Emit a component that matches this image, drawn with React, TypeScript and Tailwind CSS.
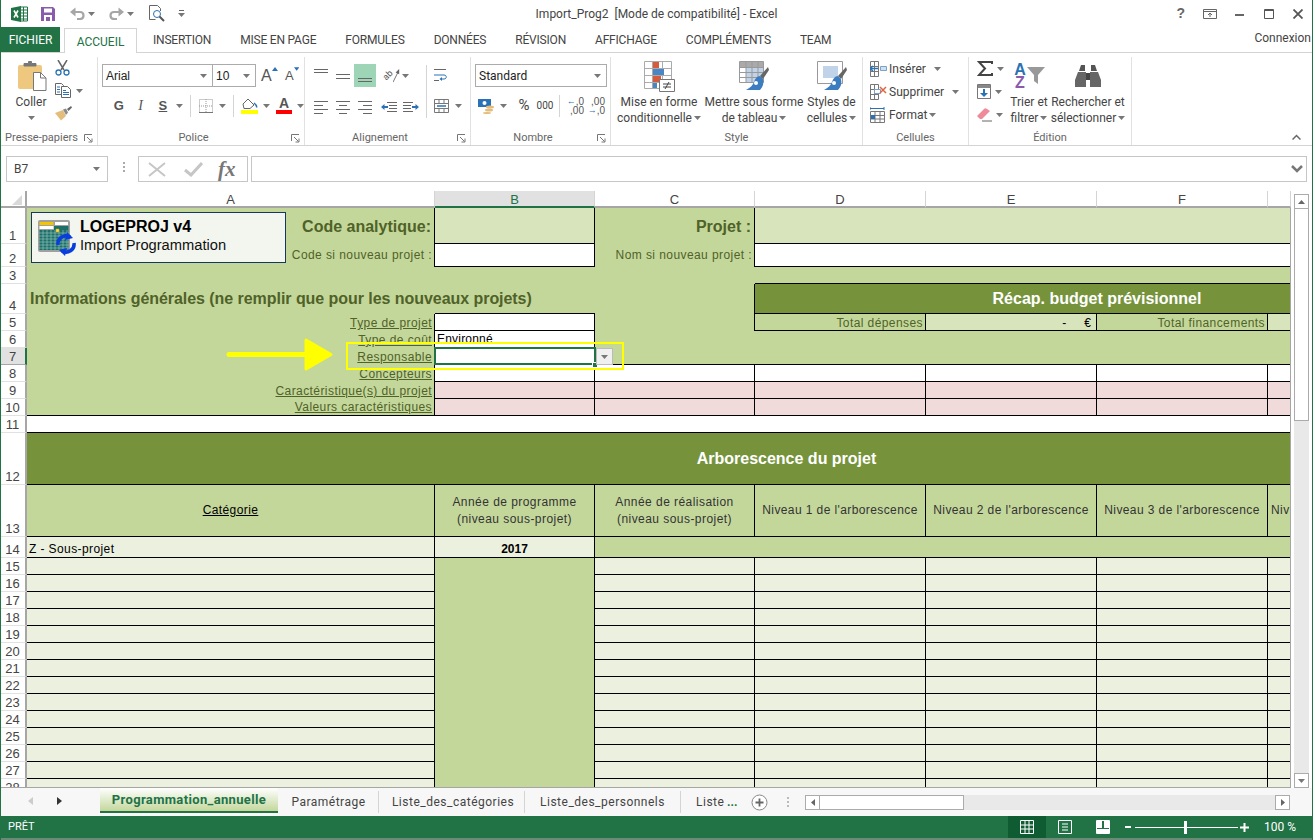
import type { ReactNode } from "react";

const Caret = ({ className = "" }: { className?: string }) => (
  <svg width="7" height="4" viewBox="0 0 7 4" className={className}>
    <path d="M0 0h7L3.5 4z" fill="#777" />
  </svg>
);

const Launcher = () => (
  <svg width="9" height="9" viewBox="0 0 9 9">
    <path d="M0.5 7V0.5H8M3 3l4.5 4.5M4.5 8H8V4.5" fill="none" stroke="#777" />
  </svg>
);

const Lines = ({ rows, w = 14 }: { rows: [number, number, number][]; w?: number }) => (
  <svg width={w} height="14" viewBox={`0 0 ${w} 14`}>
    {rows.map(([y, a, b]) => (
      <path key={y} d={`M${a} ${y + 0.5}H${b}`} stroke="#666" />
    ))}
  </svg>
);

function ExcelLogo() {
  return (
    <svg width="17" height="16" viewBox="0 0 17 16">
      <path d="M9 1h7.5v14H9z" fill="#fff" stroke="#217346" />
      <path d="M9 4h7M9 7h7M9 10h7M9 13h7M12.5 1v14" stroke="#217346" />
      <path d="M0 2l10-2v16L0 14z" fill="#217346" />
      <path d="M3 4.5l4 7M7 4.5l-4 7" stroke="#fff" strokeWidth="1.6" />
    </svg>
  );
}

function SaveIcon() {
  return (
    <svg width="14" height="14" viewBox="0 0 14 14">
      <path d="M0 0h12l2 2v12H0z" fill="#8a5aab" />
      <path d="M3 1.5h8v4H3z" fill="#fff" />
      <path d="M3 8h8v6H3z" fill="#fff" />
      <path d="M5 10h4v4H5z" fill="#8a5aab" />
    </svg>
  );
}

function UndoIcon({ flip = false }: { flip?: boolean }) {
  return (
    <svg width="15" height="13" viewBox="0 0 15 13" className={flip ? "-scale-x-100" : ""}>
      <path d="M2 5h8c2 0 3.500 1.500 3.500 3.500S12 12 10 12H7" fill="none" stroke="#a6a6a6" strokeWidth="2.200" />
      <path d="M5.500 0.500v9L0 5z" fill="#a6a6a6" />
    </svg>
  );
}

function PreviewIcon() {
  return (
    <svg width="16" height="17" viewBox="0 0 16 17">
      <path d="M0.500 0.500h8l3 3V6M0.500 0.500v14h6" fill="none" stroke="#666" />
      <circle cx="8" cy="9" r="3.500" fill="#fff" stroke="#2a72b5" />
      <path d="M10.500 11.500l4.500 4.500" stroke="#555" strokeWidth="2" />
    </svg>
  );
}

function PasteIcon() {
  return (
    <svg width="29" height="31" viewBox="0 0 29 31">
      <rect x="0" y="5" width="24" height="24" rx="2" fill="#edc87e" />
      <path d="M6 6V3.500h4.500V1.500h3v2H18V6z" fill="#777" stroke="#777" />
      <path d="M15.500 12.500h7l5.500 5.500v12.500H15.500z" fill="#fff" stroke="#777" />
      <path d="M22.500 12.500V18H28" fill="none" stroke="#777" />
    </svg>
  );
}

function CutIcon() {
  return (
    <svg width="15" height="16" viewBox="0 0 15 16">
      <path d="M3 0l6 10M12 0L6 10" stroke="#666" strokeWidth="1.500" />
      <circle cx="3.500" cy="12.500" r="2.500" fill="none" stroke="#2a72b5" strokeWidth="1.300" />
      <circle cx="11.500" cy="12.500" r="2.500" fill="none" stroke="#2a72b5" strokeWidth="1.300" />
    </svg>
  );
}

function CopyIcon() {
  return (
    <svg width="16" height="15" viewBox="0 0 16 15">
      <path d="M0.500 0.500h6l2 2v9h-8z" fill="#fff" stroke="#666" />
      <path d="M6.500 3.500h6l3 3v8h-9z" fill="#fff" stroke="#666" />
      <path d="M2 4h3M2 6.500h3M2 9h3M8 7.500h3M8 9.500h6M8 11.500h6" stroke="#2a72b5" />
    </svg>
  );
}

function BrushIcon() {
  return (
    <svg width="17" height="15" viewBox="0 0 17 15">
      <path d="M0 7l8-3 3 6-5 4.500z" fill="#e4bd7c" />
      <path d="M8 3.500l3-1 2 4-2 2.500z" fill="#8a8a8a" />
      <path d="M12 3l4-3 1 1.500-3.500 3.500z" fill="#666" />
    </svg>
  );
}

function GrowA({ up }: { up: boolean }) {
  return (
    <span className={`flex items-start font-['Liberation_Sans',sans-serif] text-[#555] ${up ? "w-[17px] text-[16px]" : "w-[14px] text-[13px]"}`}>
      <span className="leading-[20px]">A</span>
      <svg width="6" height="4" viewBox="0 0 6 4" className="mt-[1px]">
        <path d={up ? "M0 4h6L3 0z" : "M0 0h6L3 4z"} fill="#2a72b5" />
      </svg>
    </span>
  );
}

function BordersIcon() {
  return (
    <svg width="14" height="14" viewBox="0 0 14 14">
      <path d="M0.500 0.500h13v13h-13zM7 0v14M0 7h14" fill="none" stroke="#999" strokeDasharray="1 1" />
      <path d="M0 13.500h14" stroke="#777" />
    </svg>
  );
}

function FillIcon() {
  return (
    <svg width="17" height="16" viewBox="0 0 17 16">
      <path d="M2 6l5-5 6 6-4 3.500H3z" fill="#fff" stroke="#666" />
      <path d="M13 5c2 1.500 3 3 2.500 4.500" stroke="#2a72b5" strokeWidth="1.500" fill="none" />
      <path d="M0 12h17v4H0z" fill="#ffff00" />
    </svg>
  );
}

function FontColorIcon() {
  return (
    <span className="flex w-[16px] flex-col items-center">
      <span className="font-['Liberation_Sans',sans-serif] text-[14px] font-bold leading-[12px] text-[#555]">A</span>
      <span className="mt-[1px] h-[4px] w-[16px] bg-[#ff0000]" />
    </span>
  );
}

function OrientIcon() {
  return (
    <span className="flex h-[16px] w-[17px] items-center">
      <span className="-rotate-45 text-[9px] leading-[9px] text-[#555]">ab</span>
      <svg width="8" height="16" viewBox="0 0 8 16">
        <path d="M0 15L6 3" stroke="#666" />
        <path d="M7 0l0 6-4-2z" fill="#666" />
      </svg>
    </span>
  );
}

function IndentIcon({ right = false }: { right?: boolean }) {
  return (
    <svg width="16" height="12" viewBox="0 0 16 12" className={right ? "-scale-x-100" : ""}>
      <path d="M6 1.500h10M8 4.500h8M8 7.500h8M6 10.500h10" stroke="#666" />
      <path d="M0 6l3.500-3v2H7v2H3.500v2z" fill="#2a72b5" />
    </svg>
  );
}

function WrapIcon() {
  return (
    <svg width="15" height="14" viewBox="0 0 15 14">
      <path d="M0 1.500h12M0 12.500h5" stroke="#666" />
      <path d="M0 7h10c3 0 3 4 0 4H7" fill="none" stroke="#2a72b5" />
      <path d="M8 9l-2.500 2L8 13z" fill="#2a72b5" />
    </svg>
  );
}

function MergeIcon() {
  return (
    <svg width="15" height="14" viewBox="0 0 15 14">
      <path d="M0.500 0.500h14v13H0.500zM0 4.500h15M0 9.500h15M5 0v4M10 0v4M5 10v4M10 10v4" fill="none" stroke="#777" />
      <path d="M3 7h9" stroke="#2a72b5" strokeWidth="1.500" />
    </svg>
  );
}

function CurrencyIcon() {
  return (
    <svg width="17" height="16" viewBox="0 0 17 16">
      <path d="M0 1h13v8H0z" fill="#2a72b5" />
      <circle cx="6.500" cy="5" r="2" fill="#fff" />
      <ellipse cx="12" cy="9" rx="4" ry="1.500" fill="#e4bd7c" />
      <ellipse cx="11" cy="12" rx="4" ry="1.500" fill="#e4bd7c" />
      <ellipse cx="9" cy="15" rx="4" ry="1" fill="#e4bd7c" />
    </svg>
  );
}

function DecimalIcon({ inc }: { inc: boolean }) {
  return (
    <span className="flex w-[17px] flex-col items-end whitespace-nowrap font-['Liberation_Sans',sans-serif] text-[10px] leading-[9px] text-[#555]">
      <span className="flex items-center">
        {inc && <span className="text-[9px] font-bold text-[#2a72b5]">←</span>}
        {inc ? ",0" : ",00"}
      </span>
      <span className="flex items-center">
        {!inc && <span className="text-[9px] font-bold text-[#2a72b5]">→</span>}
        {inc ? ",00" : ",0"}
      </span>
    </span>
  );
}

function CondFormatIcon() {
  return (
    <svg width="31" height="31" viewBox="0 0 31 31">
      <path d="M0.500 0.500h27v27H0.500zM0 7.500h28M0 14.500h28M0 21.500h28M8.500 0v28M18.500 0v28" fill="none" stroke="#aaa" />
      <path d="M9 1h6v6H9zM9 15h8v6H9z" fill="#d9593b" />
      <path d="M9 8h11v6H9zM9 22h4v5H9z" fill="#4a86c5" />
      <path d="M15.500 18.500h15v12h-15z" fill="#fff" stroke="#777" />
      <path d="M19 23h8M19 26h8M25 21l-4 7" stroke="#444" />
    </svg>
  );
}

function TableFormatIcon() {
  return (
    <svg width="30" height="30" viewBox="0 0 30 30">
      <path d="M0.500 0.500h24v21h-24z" fill="#fff" stroke="#999" />
      <path d="M1 1h23v5H1z" fill="#aaa" />
      <path d="M7 6h17v15H7z" fill="#c0d3e8" />
      <path d="M0 6.500h25M0 11.500h25M0 16.500h25M7 0v22M13 0v22M19 0v22" stroke="#999" />
      <path d="M29 6l-8 9 3 3 6-9z" fill="#666" />
      <path d="M21 15c-3 0-5 3-6 6-1 3-4 6-8 8h14c3-3 4-7 3-11z" fill="#3b7dbe" />
      <circle cx="17" cy="22" r="2" fill="#fff" />
    </svg>
  );
}

function CellStyleIcon() {
  return (
    <svg width="30" height="30" viewBox="0 0 30 30">
      <path d="M0.500 0.500h25v22h-25z" fill="#fff" stroke="#999" />
      <path d="M6 5h15v12H6z" fill="#c0d3e8" />
      <path d="M29 6l-8 9 3 3 6-9z" fill="#666" />
      <path d="M21 15c-3 0-5 3-6 6-1 3-4 6-8 8h14c3-3 4-7 3-11z" fill="#3b7dbe" />
      <circle cx="17" cy="22" r="2" fill="#fff" />
    </svg>
  );
}

function CellOpIcon({ kind }: { kind: "ins" | "del" | "fmt" }) {
  return (
    <svg width="17" height="16" viewBox="0 0 17 16">
      {kind === "fmt" ? (
        <>
          <path d="M0 1.500h14M0 0v3M14 0v3" stroke="#2a72b5" />
          <path d="M0.500 4.500h14v11h-14zM0 8.500h15M0 12h15M5 4v12M10 4v12" fill="none" stroke="#777" />
          <path d="M1 8h4v4H1z" fill="#2a72b5" />
        </>
      ) : (
        <>
          <path d="M0.500 0.500h8v15h-8zM0 5.500h9M0 10.500h9M4.500 0v16" fill="none" stroke="#777" />
          {kind === "ins" ? (
            <>
              <path d="M10.500 5.500h6v4h-6z" fill="#cfe0f0" stroke="#7aa3cc" />
              <path d="M1 7.500h7M3 5l-3 2.500L3 10" fill="none" stroke="#2a72b5" strokeWidth="1.500" />
            </>
          ) : (
            <>
              <path d="M4.500 5.500h6v4h-6z" fill="#fff" stroke="#7aa3cc" />
              <path d="M10 3l6 6M16 3l-6 6" stroke="#e0663f" strokeWidth="1.500" />
            </>
          )}
        </>
      )}
    </svg>
  );
}

function SumIcon() {
  return (
    <svg width="16" height="15" viewBox="0 0 16 15">
      <path d="M15 3V1H2l6 6.500L2 14h13v-2" fill="none" stroke="#444" strokeWidth="2" />
    </svg>
  );
}

function FillDownIcon() {
  return (
    <svg width="14" height="15" viewBox="0 0 14 15">
      <path d="M0.500 0.500h13v14h-13z" fill="#fff" stroke="#777" />
      <path d="M1 1h12v3H1z" fill="#888" />
      <path d="M6 5h2v4h3l-4 4-4-4h3z" fill="#2a72b5" />
    </svg>
  );
}

function EraserIcon() {
  return (
    <svg width="15" height="14" viewBox="0 0 15 14">
      <path d="M0 8l7-7c1-1 2-1 3 0l3 2-8 8H3z" fill="#ee8a9a" />
      <path d="M5 13h10" stroke="#666" />
    </svg>
  );
}

function SortIcon() {
  return (
    <span className="flex h-[28px] w-[31px] items-center">
      <span className="flex w-[13px] flex-col items-center font-['Liberation_Sans',sans-serif] text-[16px] font-bold leading-[13px]">
        <span className="text-[#2a72b5]">A</span>
        <span className="text-[#8a5aab]">Z</span>
      </span>
      <svg width="18" height="17" viewBox="0 0 18 17" className="-mt-[1px]">
        <path d="M0 0h18l-7 8v9l-4-3V8z" fill="#999" />
      </svg>
    </span>
  );
}

function BinocularsIcon() {
  return (
    <svg width="26" height="24" viewBox="0 0 26 24">
      <path d="M4 7l2-6h4v6zM16 1h4l2 6h-6z" fill="#555" />
      <path d="M3 8h8v15H0v-7zM15 8h8l3 8v7H15z" fill="#666" />
      <path d="M11 9h4v7h-4z" fill="#444" />
    </svg>
  );
}

function Group({ label, w, launcher, children }: { label: string; w: string; launcher?: boolean; children: ReactNode }) {
  return (
    <div className={`flex h-[88px] shrink-0 flex-col border-r border-[#e1e1e1] ${w}`}>
      <div className="h-[74px]">{children}</div>
      <div className="flex h-[14px] items-center text-[11px] leading-[14px] text-[#666]">
        <span className="flex-1 text-center">{label}</span>
        {launcher && (
          <span className="flex w-[15px] justify-end pr-[4px]">
            <Launcher />
          </span>
        )}
      </div>
    </div>
  );
}

function Combo({ w, text, sans = false }: { w: string; text: string; sans?: boolean }) {
  return (
    <div className={`flex h-[23px] items-center justify-between border border-[#ababab] pl-[3px] pr-[5px] text-[12px] text-[#222] ${w} ${sans ? "" : "font-['Liberation_Sans',sans-serif]"}`}>
      <span>{text}</span>
      <Caret />
    </div>
  );
}

function BigButton({ l1, l2, icon, w }: { l1: string; l2: string; icon: ReactNode; w: string }) {
  return (
    <div className={`flex flex-col items-center text-[12px] leading-[16px] text-[#444] ${w}`}>
      <div className="flex h-[37px] items-center justify-center pt-[1px]">{icon}</div>
      <span className="whitespace-nowrap">{l1}</span>
      <span className="flex items-center gap-[2px] whitespace-nowrap">
        {l2}
        <Caret />
      </span>
    </div>
  );
}

const Sep = ({ className = "" }: { className?: string }) => <span className={`h-[22px] w-px bg-[#d4d4d4] ${className}`} />;

function Ribbon() {
  return (
    <div className="flex h-[93px] border-b border-[#d4d4d4] pt-[4px]">
      <Group label="Presse-papiers" w="w-[97px]" launcher>
        <div className="flex">
          <div className="flex w-[60px] flex-col items-center text-[12px] leading-[16px] text-[#444]">
            <div className="mt-[3px] pl-[3px]"><PasteIcon /></div>
            <span className="mt-[3px]">Coller</span>
            <Caret className="mt-[6px]" />
          </div>
          <div className="-ml-[6px] -mt-[1px] flex flex-col">
            <div className="flex h-[23px] items-center"><CutIcon /></div>
            <div className="flex h-[23px] items-center gap-[5px]"><CopyIcon /><Caret /></div>
            <div className="flex h-[23px] items-center"><BrushIcon /></div>
          </div>
        </div>
      </Group>

      <Group label="Police" w="w-[207px]" launcher>
        <div className="flex items-center pl-[4px] pt-[7px]">
          <Combo w="w-[111px]" text="Arial" />
          <Combo w="w-[44px] -ml-px" text="10" />
          <span className="ml-[5px]"><GrowA up /></span>
          <span className="ml-[7px]"><GrowA up={false} /></span>
        </div>
        <div className="flex h-[30px] items-center pl-[10px] pt-[7px] text-[#555]">
          <span className="w-[22px] text-center font-['Liberation_Sans',sans-serif] text-[13px] font-bold">G</span>
          <span className="w-[22px] text-center font-['Liberation_Serif',serif] text-[14px] italic">I</span>
          <span className="w-[23px] text-center font-['Liberation_Sans',sans-serif] text-[13px] font-bold underline">S</span>
          <Caret className="ml-[2px]" />
          <Sep className="ml-[7px]" />
          <span className="ml-[8px]"><BordersIcon /></span>
          <Caret className="ml-[6px]" />
          <Sep className="ml-[7px]" />
          <span className="ml-[7px]"><FillIcon /></span>
          <Caret className="ml-[5px]" />
          <span className="ml-[6px]"><FontColorIcon /></span>
          <Caret className="ml-[5px]" />
        </div>
      </Group>

      <Group label="Alignement" w="w-[166px]" launcher>
        <div className="flex">
          <div className="pl-[8px] pt-[7px]">
            <div className="flex h-[23px] items-center">
              <span className="ml-[1px]"><Lines rows={[[0, 0, 14], [3, 0, 14]]} /></span>
              <span className="ml-[8px]"><Lines rows={[[5, 0, 14], [9, 0, 14]]} /></span>
              <span className="ml-[4px] flex h-[23px] w-[22px] items-center justify-center bg-[#9fd5b7]"><Lines rows={[[9, 0, 14], [12, 0, 14]]} /></span>
              <span className="ml-[7px]"><OrientIcon /></span>
              <Caret className="ml-[2px]" />
            </div>
            <div className="mt-[8px] flex h-[23px] items-center">
              <span className="ml-[1px]"><Lines rows={[[1, 0, 14], [5, 0, 9], [9, 0, 14], [13, 0, 9]]} /></span>
              <span className="ml-[8px]"><Lines rows={[[1, 0, 14], [5, 3, 11], [9, 0, 14], [13, 3, 11]]} /></span>
              <span className="ml-[8px]"><Lines rows={[[1, 0, 14], [5, 5, 14], [9, 0, 14], [13, 5, 14]]} /></span>
              <span className="ml-[9px]"><IndentIcon /></span>
              <span className="ml-[6px]"><IndentIcon right /></span>
            </div>
          </div>
          <div className="ml-[7px] mt-[8px] flex h-[53px] w-px bg-[#d4d4d4]" />
          <div className="flex flex-col gap-[17px] pl-[7px] pt-[11px]">
            <WrapIcon />
            <div className="flex items-center gap-[6px]"><MergeIcon /><Caret /></div>
          </div>
        </div>
      </Group>

      <Group label="Nombre" w="w-[140px]" launcher>
        <div className="pl-[4px] pt-[7px]">
          <Combo w="w-[132px]" text="Standard" sans />
        </div>
        <div className="flex h-[30px] items-center pl-[7px] pt-[7px] text-[#444]">
          <CurrencyIcon />
          <Caret className="ml-[5px]" />
          <span className="ml-[9px] w-[16px] text-center text-[15px]">%</span>
          <span className="ml-[4px] w-[18px] text-center text-[10px]">000</span>
          <Sep className="ml-[5px]" />
          <span className="ml-[7px]"><DecimalIcon inc /></span>
          <span className="ml-[4px]"><DecimalIcon inc={false} /></span>
        </div>
      </Group>

      <Group label="Style" w="w-[252px]">
        <div className="flex">
          <BigButton w="w-[96px]" l1="Mise en forme" l2="conditionnelle" icon={<CondFormatIcon />} />
          <BigButton w="w-[94px]" l1="Mettre sous forme" l2="de tableau" icon={<TableFormatIcon />} />
          <BigButton w="w-[61px]" l1="Styles de" l2="cellules" icon={<CellStyleIcon />} />
        </div>
      </Group>

      <Group label="Cellules" w="w-[106px]">
        <div className="flex flex-col pl-[7px] text-[12px] text-[#444]">
          {[
            { k: "ins" as const, t: "Insérer", g: "ml-[8px]" },
            { k: "del" as const, t: "Supprimer", g: "ml-[8px]" },
            { k: "fmt" as const, t: "Format", g: "ml-[2px]" },
          ].map((r) => (
            <div key={r.t} className="flex h-[23px] items-center">
              <CellOpIcon kind={r.k} />
              <span className="ml-[2px]">{r.t}</span>
              <Caret className={r.g} />
            </div>
          ))}
        </div>
      </Group>

      <Group label="Édition" w="w-[163px]">
        <div className="flex">
          <div className="flex flex-col pl-[8px]">
            {[<SumIcon key="s" />, <FillDownIcon key="f" />, <EraserIcon key="e" />].map((ic, i) => (
              <div key={i} className="flex h-[23px] w-[30px] items-center gap-[4px]">
                {ic}
                <Caret />
              </div>
            ))}
          </div>
          <BigButton w="w-[48px] -ml-[2px]" l1="Trier et" l2="filtrer" icon={<SortIcon />} />
          <BigButton w="w-[70px]" l1="Rechercher et" l2="sélectionner" icon={<BinocularsIcon />} />
        </div>
      </Group>

      <div className="flex flex-1 items-end justify-end pb-[5px] pr-[11px]">
        <svg width="9" height="6" viewBox="0 0 9 6"><path d="M0.500 5.500l4-4 4 4" fill="none" stroke="#666" strokeWidth="1.500" /></svg>
      </div>
    </div>
  );
}

const green = "bg-[#c4d79b]";
const light = "bg-[#d8e4bc]";
const dark = "bg-[#76933c]";
const pale = "bg-[#ebf1de]";
const pink = "bg-[#f0dbda]";

function RowHead({ n }: { n: number }) {
  const on = n === 7;
  return (
    <div className={`flex items-end justify-center border-b border-r-2 pr-[1px] text-[13px] leading-[15px] text-[#444] ${on ? "border-b-[#a6a6a6] border-r-[#217346] bg-[#e1e1e1]" : "border-b-[#e1e1e1] border-r-[#a6a6a6] bg-white"}`}>
      {n}
    </div>
  );
}

function Cell({ className = "", children }: { className?: string; children?: ReactNode }) {
  const align = className.includes("items-center") ? "" : "items-end";
  return <div className={`flex min-w-0 overflow-hidden whitespace-nowrap leading-[15px] ${align} ${className}`}>{children}</div>;
}

const label = "justify-end pr-[2px] text-[12px] tracking-[0.42px] text-[#4f6228]";
const line = "border-r border-b border-black";

function Sheet() {
  const cols = ["A", "B", "C", "D", "E", "F", ""];
  return (
    <div className="relative h-[597px] w-[1290px] overflow-hidden">
      <div className="grid grid-cols-[26px_408px_160px_160px_171px_171px_171px_23px] grid-rows-[17px_36px_23px_17px_30px_repeat(7,17px)_52px_52px_21px_repeat(14,17px)] font-['Liberation_Sans',Arial,sans-serif] text-[12px] text-black">
        <div className="flex items-end justify-end border-b-2 border-r-2 border-[#a6a6a6] pb-[1px] pr-[3px]">
          <svg width="10" height="10" viewBox="0 0 10 10"><path d="M10 0v10H0z" fill="#d9d9d9" /></svg>
        </div>
        {cols.map((c, i) => (
          <div key={i} className={`flex items-center justify-center border-r border-[#d4d4d4] pt-[1px] text-[13px] leading-none text-[#444] ${c === "B" ? "border-b-2 border-b-[#217346] bg-[#e1e1e1] text-[#217346]" : "border-b-2 border-b-[#a6a6a6]"}`}>{c}</div>
        ))}

        <RowHead n={1} />
        <Cell className={`${green} justify-end border-r border-black pb-[10px] pr-[3px] text-[16px] font-bold text-[#4f6228]`}>Code analytique:</Cell>
        <Cell className={`${light} ${line}`} />
        <Cell className={`${green} justify-end border-r border-black pb-[10px] pr-[3px] text-[16px] font-bold text-[#4f6228]`}>Projet :</Cell>
        <Cell className={`col-span-4 ${light} border-b border-black`} />

        <RowHead n={2} />
        <Cell className={`${green} ${label} border-r border-black pb-[4px]`}>Code si nouveau projet :</Cell>
        <Cell className={`bg-white ${line}`} />
        <Cell className={`${green} ${label} border-r border-black pb-[4px]`}>Nom si nouveau projet :</Cell>
        <Cell className="col-span-4 border-b border-black bg-white" />

        <RowHead n={3} />
        <Cell className={`col-span-3 ${green}`} />
        <Cell className={`col-span-4 ${green} border-b border-black`} />

        <RowHead n={4} />
        <Cell className={`col-span-3 ${green} border-r border-black pb-[8px] pl-[3px] text-[16px] font-bold tracking-[-0.05px] text-[#4f6228]`}>Informations générales (ne remplir que pour les nouveaux projets)</Cell>
        <Cell className={`col-span-4 ${dark} items-center justify-center border-b border-black pl-[148px] text-[16px] font-bold text-white`}>Récap. budget prévisionnel</Cell>

        <RowHead n={5} />
        <Cell className={`${green} ${label} border-r border-black`}><span className="underline">Type de projet</span></Cell>
        <Cell className={`bg-white ${line} shadow-[0_-1px_0_#000]`} />
        <Cell className={`${green} border-r border-black`} />
        <Cell className={`${green} ${label} ${line}`}><span className="translate-y-[1px]">Total dépenses</span></Cell>
        <Cell className={`${light} ${line} justify-end pr-[5px]`}><span className="translate-y-[1px]">-</span><span className="ml-[18px] translate-y-[1px]">€</span></Cell>
        <Cell className={`${green} ${label} ${line}`}><span className="translate-y-[1px]">Total financements</span></Cell>
        <Cell className={`${light} border-b border-black`} />

        <RowHead n={6} />
        <Cell className={`${green} ${label} border-r border-black`}><span className="underline">Type de coût</span></Cell>
        <Cell className={`bg-white ${line} pl-[2px] tracking-[0.2px]`}>Environné</Cell>
        <Cell className={`col-span-5 ${green}`} />

        <RowHead n={7} />
        <Cell className={`${green} ${label} border-r border-black`}><span className="underline">Responsable</span></Cell>
        <Cell className={`bg-white ${line}`} />
        <Cell className={`col-span-5 ${green} border-b border-black`} />

        <RowHead n={8} />
        <Cell className={`${green} ${label} border-r border-black`}><span className="underline">Concepteurs</span></Cell>
        <Cell className={`bg-white ${line}`} />
        <Cell className={`bg-white ${line}`} />
        <Cell className={`bg-white ${line}`} />
        <Cell className={`bg-white ${line}`} />
        <Cell className={`bg-white ${line}`} />
        <Cell className="border-b border-black bg-white" />

        {[
          { n: 9, t: "Caractéristique(s) du projet", a: "border-r" },
          { n: 10, t: "Valeurs caractéristiques", a: "border-r border-b" },
        ].map((r) => (
          <div key={r.n} className="contents">
            <RowHead n={r.n} />
            <Cell className={`${green} ${label} ${r.a} border-black`}><span className="underline">{r.t}</span></Cell>
            <Cell className={`${pink} ${line}`} />
            <Cell className={`${pink} ${line}`} />
            <Cell className={`${pink} ${line}`} />
            <Cell className={`${pink} ${line}`} />
            <Cell className={`${pink} ${line}`} />
            <Cell className={`${pink} border-b border-black`} />
          </div>
        ))}

        <RowHead n={11} />
        <Cell className="col-span-7 border-b border-black bg-white" />

        <RowHead n={12} />
        <Cell className={`col-span-7 ${dark} items-center justify-center border-b border-black pl-[255px] text-[16px] font-bold text-white`}>Arborescence du projet</Cell>

        <RowHead n={13} />
        <Cell className={`${green} ${line} items-center justify-center underline`}><span className="tracking-[0.4px]">Catégorie</span></Cell>
        {[
          "Année de programme",
          "Année de réalisation",
        ].map((t) => (
          <div key={t} className={`${green} ${line} flex flex-col items-center justify-center pt-[1px] text-[12px] leading-[17px] tracking-[0.45px] text-[#333]`}>
            <span>{t}</span>
            <span>(niveau sous-projet)</span>
          </div>
        ))}
        {["Niveau 1 de l'arborescence", "Niveau 2 de l'arborescence", "Niveau 3 de l'arborescence"].map((t) => (
          <Cell key={t} className={`${green} ${line} items-center justify-center tracking-[0.4px] text-[#333]`}>{t}</Cell>
        ))}
        <Cell className={`${green} border-b border-black items-center pl-[3px] tracking-[0.4px] text-[#333]`}>Niv</Cell>

        <RowHead n={14} />
        <Cell className={`${pale} ${line} pl-[2px] tracking-[0.4px]`}>Z - Sous-projet</Cell>
        <Cell className={`${pale} ${line} justify-center font-bold`}>2017</Cell>
        <Cell className={`col-span-5 ${green} border-b border-black`} />

        {Array.from({ length: 14 }, (_, i) => i + 15).map((n) => (
          <div key={n} className="contents">
            <RowHead n={n} />
            <Cell className={`${pale} ${line}`} />
            <Cell className={`${green} border-r border-black`} />
            <Cell className={`${pale} ${line}`} />
            <Cell className={`${pale} ${line}`} />
            <Cell className={`${pale} ${line}`} />
            <Cell className={`${pale} ${line}`} />
            <Cell className={`${pale} border-b border-black`} />
          </div>
        ))}
      </div>

      <div className="absolute right-0 top-[17px] h-[580px] w-px bg-[#a6a6a6]" />
      <div className="absolute bottom-0 left-0 h-px w-full bg-[#a6a6a6]" />

      <div className="absolute left-[433px] top-[156px] h-[18px] w-[162px] border-2 border-[#217346]" />
      <div className="absolute left-[591px] top-[171px] h-[6px] w-[6px] border border-white bg-[#217346]" />
      <div className="absolute left-[595px] top-[157px] flex h-[17px] w-[17px] items-center justify-center border border-[#bbb] bg-[#f0f0f0]">
        <Caret />
      </div>
      <div className="absolute left-[345px] top-[151px] h-[28px] w-[278px] border-2 border-[#ffff00]" />
      <svg width="110" height="34" viewBox="0 0 110 34" className="absolute left-[225px] top-[147px]">
        <path d="M3 16.500H80" stroke="#ffff00" strokeWidth="5" strokeLinecap="round" />
        <path d="M80 2l25 14.500L80 31z" fill="#ffff00" stroke="#ffff00" strokeWidth="3" strokeLinejoin="round" />
      </svg>

      <div className="absolute left-[30px] top-[21px] flex h-[51px] w-[255px] border border-[#17375e] bg-[#f3f6ee] pl-[6px] pt-[5px] font-['Liberation_Sans',Arial,sans-serif]">
        <svg width="38" height="36" viewBox="0 0 38 36" className="mt-[2px] shrink-0">
          <rect x="0" y="0" width="32" height="32" rx="2" fill="#a0a0a0" />
          <path d="M1.500 2h14v3h-14z" fill="#f5c400" />
          <path d="M17 2h13v3H17z" fill="#fff" />
          <path d="M1.500 6h14v3h-14z" fill="#fff" />
          <path d="M1.500 10h29v20h-29zM16 6h14.500v4H16z" fill="#1e6f6a" />
          <path d="M1 13h30M1 16h30M1 19h30M1 22h30M1 25h30M1 28h30M5 10v20M9 10v20M13 10v20M17 10v20M21 10v20M25 10v20M29 10v20" stroke="#9dc9c4" strokeWidth="0.600" />
          <path d="M18 9h3v3h-3z" fill="#ffe14d" stroke="#c99a00" strokeWidth="0.500" />
          <path d="M20 25a8 8 0 0 1 12-8" fill="none" stroke="#0a3de0" strokeWidth="3.500" />
          <path d="M29 12l6 6-8 2z" fill="#0a3de0" />
          <path d="M36 23a8 8 0 0 1-12 8" fill="none" stroke="#0a3de0" strokeWidth="3.500" />
          <path d="M27 36l-6-6 8-2z" fill="#0a3de0" />
        </svg>
        <div className="ml-[4px] flex flex-col">
          <span className="text-[16px] font-bold leading-[18px] text-black">LOGEPROJ v4</span>
          <span className="text-[14.700px] leading-[18px] text-[#111]">Import Programmation</span>
        </div>
      </div>
    </div>
  );
}

function VScroll() {
  return (
    <div className="flex h-[597px] w-[21px] flex-col items-center pl-[3px] pr-[3px] pt-[3px]">
      <div className="flex h-[15px] w-full shrink-0 items-center justify-center border border-[#ababab] bg-white">
        <svg width="7" height="4" viewBox="0 0 7 4"><path d="M0 4h7L3.500 0z" fill="#666" /></svg>
      </div>
      <div className="h-[212px] w-full shrink-0 border-x border-b border-[#ababab] bg-white" />
      <div className="w-full flex-1 bg-[#e9e9e9]" />
      <div className="flex h-[15px] w-full shrink-0 items-center justify-center border border-[#ababab] bg-white">
        <Caret />
      </div>
    </div>
  );
}

function SheetTabs() {
  return (
    <div className="flex h-[28px] items-start bg-[#f7f7f7] text-[12px] tracking-[0.5px] text-[#444]">
      <div className="flex h-[24px] w-[99px] items-center pl-[27px] pt-[2px]">
        <svg width="5" height="8" viewBox="0 0 5 8"><path d="M5 0v8L0 4z" fill="#ccc" /></svg>
        <svg width="5" height="8" viewBox="0 0 5 8" className="ml-[24px]"><path d="M0 0v8l5-4z" fill="#333" /></svg>
      </div>
      <div className="flex h-[25px] w-[178px] items-center justify-center border-b-2 border-[#217346] bg-gradient-to-b from-white to-[#c4d79b] text-[13px] font-bold tracking-[0.35px] text-[#217346]">Programmation_annuelle</div>
      <div className="flex items-center pt-[3px]">
        <span className="w-[100px] pl-[1px] text-center">Paramétrage</span>
        <Sep />
        <span className="w-[145px] pl-[3px] text-center">Liste_des_catégories</span>
        <Sep />
        <span className="w-[155px] text-center">Liste_des_personnels</span>
        <Sep />
        <span className="ml-[15px] w-[24px] whitespace-nowrap">Liste</span>
        <span className="ml-[7px] w-[10px] font-bold tracking-normal text-[#217346]">...</span>
        <svg width="17" height="17" viewBox="0 0 17 17" className="ml-[14px]">
          <circle cx="8.500" cy="8.500" r="7.500" fill="#fff" stroke="#888" />
          <path d="M8.500 4.500v8M4.500 8.500h8" stroke="#666" strokeWidth="1.800" />
        </svg>
        <span className="ml-[19px] flex flex-col gap-[2px]">
          <i className="h-[2px] w-[2px] bg-[#bbb]" />
          <i className="h-[2px] w-[2px] bg-[#bbb]" />
          <i className="h-[2px] w-[2px] bg-[#bbb]" />
        </span>
      </div>
      <div className="ml-[16px] mr-[22px] mt-[7px] flex h-[15px] flex-1 bg-[#e9e9e9]">
        <div className="flex h-full w-[15px] items-center justify-center border border-[#ababab] bg-white">
          <svg width="4" height="7" viewBox="0 0 4 7"><path d="M4 0v7L0 3.500z" fill="#666" /></svg>
        </div>
        <div className="h-full w-[144px] border-y border-r border-[#ababab] bg-white" />
        <div className="ml-auto flex h-full w-[15px] items-center justify-center border border-[#ababab] bg-white">
          <svg width="4" height="7" viewBox="0 0 4 7"><path d="M0 0v7l4-3.500z" fill="#666" /></svg>
        </div>
      </div>
    </div>
  );
}

function StatusBar() {
  return (
    <div className="flex h-[24px] items-center border-b-2 border-[#6b8a78] bg-[#217346] pl-[7px] text-[11px] text-white">
      <span>PRÊT</span>
      <div className="ml-auto flex h-full items-center">
        <div className="flex h-full w-[38px] items-center justify-center bg-[#0f5c33]">
          <svg width="14" height="14" viewBox="0 0 14 14"><path d="M0.500 0.500h13v13H0.500zM5 0v14M9 0v14M0 5h14M0 9h14" fill="none" stroke="#fff" /></svg>
        </div>
        <div className="flex w-[38px] justify-center">
          <svg width="14" height="14" viewBox="0 0 14 14"><path d="M0.500 0.500h13v13H0.500z" fill="none" stroke="#fff" /><path d="M4 4h6M4 7h6M4 10h6" stroke="#fff" /></svg>
        </div>
        <div className="flex w-[38px] justify-center">
          <svg width="14" height="14" viewBox="0 0 14 14"><path d="M0.500 0.500h13v13H0.500z" fill="none" stroke="#fff" /><path d="M1 8h5V1H1zM8 8h5V1H8zM1 9h12v4H1z" fill="#fff" /></svg>
        </div>
        <span className="ml-[3px] h-[2px] w-[6px] bg-white" />
        <div className="ml-[4px] flex h-[1px] w-[103px] items-center bg-white pl-[49px]">
          <span className="h-[13px] w-[3px] bg-white" />
        </div>
        <svg width="9" height="9" viewBox="0 0 9 9" className="ml-[2px]"><path d="M4.500 0v9M0 4.500h9" stroke="#fff" strokeWidth="2" /></svg>
        <span className="ml-[15px] mr-[18px] w-[30px] whitespace-nowrap text-[12px]">100 %</span>
      </div>
    </div>
  );
}

export default function App() {
  const tabs = ["INSERTION", "MISE EN PAGE", "FORMULES", "DONNÉES", "RÉVISION", "AFFICHAGE", "COMPLÉMENTS", "TEAM"];
  return (
    <div className="h-[840px] w-[1313px] overflow-hidden border-x border-[#217346] bg-white font-['Roboto',sans-serif] text-[#444]">
      <div className="grid h-[27px] grid-cols-[1fr_auto_1fr] items-center">
        <div className="flex items-center pl-[10px]">
          <ExcelLogo />
          <span className="ml-[13px]"><SaveIcon /></span>
          <span className="ml-[15px]"><UndoIcon /></span>
          <Caret className="ml-[3px]" />
          <span className="ml-[14px]"><UndoIcon flip /></span>
          <Caret className="ml-[3px]" />
          <span className="ml-[15px]"><PreviewIcon /></span>
          <span className="ml-[13px] flex flex-col items-center gap-[2px]">
            <i className="h-px w-[5px] bg-[#666]" />
            <Caret />
          </span>
        </div>
        <span className="whitespace-nowrap pt-[1px] text-[12px] text-[#444]">Import_Prog2&nbsp; [Mode de compatibilité] - Excel</span>
        <div className="flex items-center justify-end pr-[9px]">
          <span className="font-['Liberation_Sans',sans-serif] text-[14px] font-bold text-[#666]">?</span>
          <svg width="14" height="10" viewBox="0 0 14 10" className="ml-[18px]"><path d="M0.500 0.500h13v9h-13zM0 2.500h14M7 8V4M5 6l2-2 2 2" fill="none" stroke="#666" /></svg>
          <span className="ml-[18px] mt-[3px] h-[2px] w-[9px] bg-[#666]" />
          <svg width="10" height="10" viewBox="0 0 10 10" className="ml-[20px]"><path d="M0.500 0.500h9v9h-9zM0 1.500h10" fill="none" stroke="#555" /></svg>
          <svg width="10" height="10" viewBox="0 0 10 10" className="ml-[19px]"><path d="M0.500 0.500l9 9M9.500 0.500l-9 9" stroke="#555" strokeWidth="1.800" /></svg>
        </div>
      </div>

      <div className="flex h-[26px] items-end border-b border-[#d4d4d4] text-[12px]">
        <div className="flex h-[25px] w-[59px] items-center justify-center bg-[#217346] pt-px text-white">FICHIER</div>
        <div className="relative top-px ml-[4px] flex h-[25px] w-[73px] items-center justify-center border-x border-t border-[#d4d4d4] bg-white pt-px text-[#217346]">ACCUEIL</div>
        <div className="ml-[1.500px] flex h-[25px] pt-px tracking-[-0.2px]">
          {tabs.map((t) => (
            <span key={t} className="flex items-center whitespace-nowrap px-[14.500px]">{t}</span>
          ))}
        </div>
        <span className="ml-auto h-[25px] pr-[1px] leading-[22px]">Connexion</span>
      </div>

      <Ribbon />

      <div className="flex h-[45px] items-start pl-[5px] pt-[10px]">
        <div className="flex h-[26px] w-[102px] items-center justify-between border border-[#c6c6c6] px-[7px] text-[12px]">
          <span>B7</span>
          <Caret />
        </div>
        <span className="ml-[15px] mt-[6px] flex flex-col gap-[2px]">
          <i className="h-[2px] w-[2px] bg-[#aaa]" />
          <i className="h-[2px] w-[2px] bg-[#aaa]" />
          <i className="h-[2px] w-[2px] bg-[#aaa]" />
        </span>
        <div className="ml-[13px] flex h-[26px] w-[110px] items-center border border-[#c6c6c6] pl-[9px]">
          <svg width="18" height="15" viewBox="0 0 18 15"><path d="M1 1l16 13M17 1L1 14" stroke="#c6c6c6" strokeWidth="2" /></svg>
          <svg width="19" height="15" viewBox="0 0 19 15" className="ml-[18px]"><path d="M1 8l6 5L18 1" fill="none" stroke="#c6c6c6" strokeWidth="3" /></svg>
          <span className="ml-[15px] font-['Liberation_Serif',serif] text-[21px] font-bold italic leading-none text-[#777]">fx</span>
        </div>
        <div className="ml-[3px] mr-[5px] flex h-[26px] flex-1 items-center justify-end border border-[#c6c6c6] pr-[3px]">
          <svg width="12" height="8" viewBox="0 0 12 8"><path d="M1 1l5 5 5-5" fill="none" stroke="#777" strokeWidth="2.500" /></svg>
        </div>
      </div>

      <div className="flex">
        <Sheet />
        <VScroll />
      </div>

      <SheetTabs />
      <StatusBar />
    </div>
  );
}
